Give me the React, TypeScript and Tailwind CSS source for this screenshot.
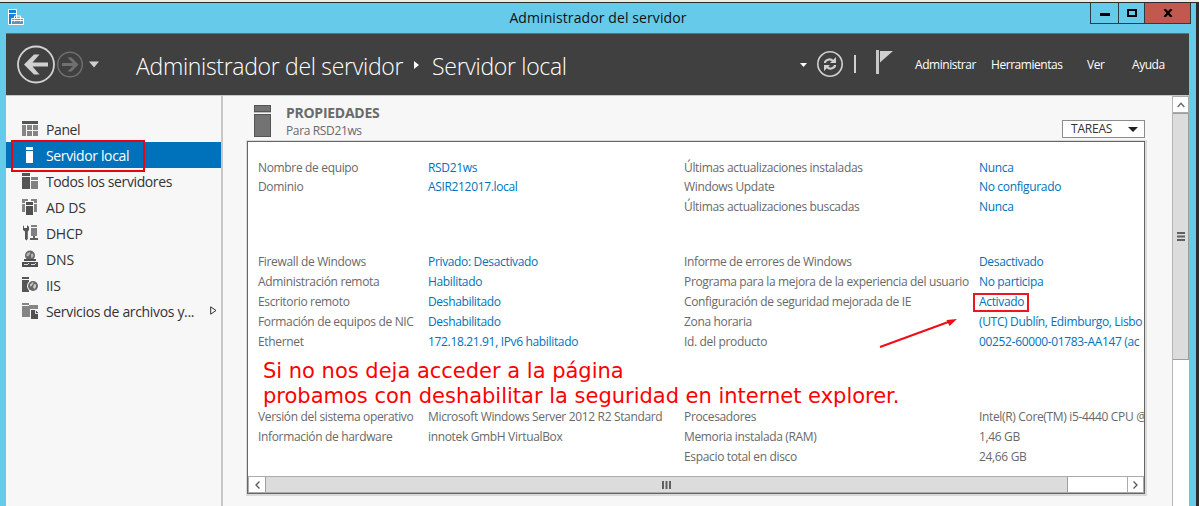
import type { ReactNode } from "react";

type Row = { label: string; value: string; boxed?: boolean };
type Group = { rows: Row[]; plain?: boolean };

const leftGroups: Group[] = [
  { rows: [{ label: "Nombre de equipo", value: "RSD21ws" }, { label: "Dominio", value: "ASIR212017.local" }] },
  {
    rows: [
      { label: "Firewall de Windows", value: "Privado: Desactivado" },
      { label: "Administración remota", value: "Habilitado" },
      { label: "Escritorio remoto", value: "Deshabilitado" },
      { label: "Formación de equipos de NIC", value: "Deshabilitado" },
      { label: "Ethernet", value: "172.18.21.91, IPv6 habilitado" },
    ],
  },
  {
    plain: true,
    rows: [
      { label: "Versión del sistema operativo", value: "Microsoft Windows Server 2012 R2 Standard" },
      { label: "Información de hardware", value: "innotek GmbH VirtualBox" },
    ],
  },
];

const rightGroups: Group[] = [
  {
    rows: [
      { label: "Últimas actualizaciones instaladas", value: "Nunca" },
      { label: "Windows Update", value: "No configurado" },
      { label: "Últimas actualizaciones buscadas", value: "Nunca" },
    ],
  },
  {
    rows: [
      { label: "Informe de errores de Windows", value: "Desactivado" },
      { label: "Programa para la mejora de la experiencia del usuario", value: "No participa" },
      { label: "Configuración de seguridad mejorada de IE", value: "Activado", boxed: true },
      { label: "Zona horaria", value: "(UTC) Dublín, Edimburgo, Lisbo" },
      { label: "Id. del producto", value: "00252-60000-01783-AA147 (ac" },
    ],
  },
  {
    plain: true,
    rows: [
      { label: "Procesadores", value: "Intel(R) Core(TM) i5-4440 CPU @" },
      { label: "Memoria instalada (RAM)", value: "1,46 GB" },
      { label: "Espacio total en disco", value: "24,66 GB" },
    ],
  },
];

function Icon({ children }: { children: ReactNode }) {
  return (
    <svg width="16" height="16" viewBox="0 0 16 16" className="shrink-0 overflow-visible" shapeRendering="crispEdges">
      {children}
    </svg>
  );
}

const PanelIcon = (
  <Icon>
    <path fill="#555" d="M0 0h16v3H0z" />
    <path fill="#858585" d="M0 4h4v11H0zM5 4h5v5H5zM11 4h5v5h-5zM5 10h5v5H5zM11 10h5v5h-5z" />
  </Icon>
);
const LocalIcon = (
  <Icon>
    <path fill="#fff" d="M4 0h7v3H4zM4 4h7v12H4z" />
  </Icon>
);
const AllIcon = (
  <Icon>
    <path fill="#555" d="M0 0h8v3H0zM0 4h8v12H0z" />
    <path fill="#808080" d="M9 4h7v3H9zM9 8h7v8H9z" />
  </Icon>
);
const AdIcon = (
  <Icon>
    <path fill="#858585" d="M0 0h6v2H3v2H0zM9 0h6v4h-3V2H9zM0 5h3v8H0zM12 5h3v8h-3z" />
    <path fill="#505050" d="M4 3h7v3H4zM4 7h7v9H4z" />
  </Icon>
);
const DhcpIcon = (
  <Icon>
    <path fill="#555" shapeRendering="auto" d="M2 0v3h3V0l2 2v3L5.800 6.500V14L4.500 15.500 3 14V6.500L1 5V1.500z" />
    <path fill="#808080" d="M9 0h6v2H9zM9 3h6v8H9z" />
    <path fill="#606060" d="M11 11h2v2h3v2H8v-2h3z" />
  </Icon>
);
const DnsIcon = (
  <Icon>
    <circle cx="8" cy="4.500" r="5" fill="#666" shapeRendering="auto" />
    <path fill="#b7b7b7" shapeRendering="auto" d="M4.500 3l3-2 1 1-2 3-2 .5zM9 3l2-.5.5 2.500-1.500 2-1-.5z" />
    <path fill="#505050" d="M2 8h12v2H2zM0 10h16v6H0z" />
    <path fill="#ddd" d="M2 13h4v1H2zM6 12h1v1H6zM9 13h4v1H9zM13 12h1v1h-1z" />
    <path fill="#f7f7f7" d="M0 10h16v1H0z" />
  </Icon>
);
const IisIcon = (
  <Icon>
    <path fill="#555" d="M0 0h7v2H0zM0 3h7v12H0z" />
    <circle cx="11" cy="9" r="6" fill="#f7f7f7" shapeRendering="auto" />
    <circle cx="11" cy="9" r="5" fill="#686868" shapeRendering="auto" />
    <path fill="#c8c8c8" shapeRendering="auto" d="M8 7.500l3-2.500.5 1L9.500 9 8 9.500zM12 7l2 .5v2.500l-1.500 2-1.500-1.500z" />
  </Icon>
);
const FilesIcon = (
  <Icon>
    <path fill="#858585" d="M0 0h7v2h9v4H8v8H0z" />
    <path fill="#f7f7f7" d="M0 2h7v1H0zM8 6h1v10H8z" />
    <path fill="#505050" d="M9 7h4l3 3v6H9z" />
    <path fill="#ddd" d="M13 7h1v3h2v1h-3z" />
  </Icon>
);

const nav: { label: string; icon: ReactNode; track: string; active?: boolean; more?: boolean }[] = [
  { label: "Panel", icon: PanelIcon, track: "tracking-[-0.4px]" },
  { label: "Servidor local", icon: LocalIcon, track: "tracking-[-0.36px]", active: true },
  { label: "Todos los servidores", icon: AllIcon, track: "tracking-[-0.39px]" },
  { label: "AD DS", icon: AdIcon, track: "tracking-[-0.15px]" },
  { label: "DHCP", icon: DhcpIcon, track: "tracking-[-0.3px]" },
  { label: "DNS", icon: DnsIcon, track: "tracking-[-0.1px]" },
  { label: "IIS", icon: IisIcon, track: "tracking-[-0.3px]" },
  { label: "Servicios de archivos y...", icon: FilesIcon, track: "tracking-[-0.34px]", more: true },
];

function TitleBar() {
  return (
    <div className="relative flex h-[30px] shrink-0 justify-between pl-2">
      <svg width="16" height="17" viewBox="0 0 16 17" className="mt-1.5">
        <path d="M.5.5h8v15h-8z" fill="#1683d8" stroke="#fff" />
        <path d="M0 4.500h8" stroke="#fff" />
        <path d="M3.500 9.500h12v6h-12z" fill="#6e8fae" stroke="#fff" />
        <path d="M6.500 9V7h6v2M4 11.500h11M6.500 10.500v2M12.500 10.500v2" fill="none" stroke="#fff" />
      </svg>
      <div className="absolute inset-x-0 top-[5px] text-center text-[14px] leading-5 tracking-[0.1px] text-[#111]">
        Administrador del servidor
      </div>
      <div className="relative mr-[5px] flex h-[21px] border-x border-b border-[#2d3b43]">
        <div className="flex w-[28px] items-center justify-center border-r border-[#2d3b43]">
          <div className="mt-[3px] h-[3px] w-2.5 bg-black" />
        </div>
        <div className="flex w-[26px] items-center justify-center border-r border-[#2d3b43]">
          <div className="h-2 w-2.5 border-2 border-black" />
        </div>
        <div className="flex w-[45px] items-center justify-center bg-[#c2594f]">
          <svg width="10" height="8" viewBox="0 0 10 8">
            <path d="M1.500 0l7 8M8.500 0l-7 8" stroke="#000" strokeWidth="2.300" />
          </svg>
        </div>
      </div>
    </div>
  );
}

function Header() {
  return (
    <div className="flex h-[62px] shrink-0 items-center border-t border-[#60707a] bg-[#404040] text-white">
      <svg width="86" height="40" viewBox="0 0 86 40" className="ml-2.5 shrink-0">
        <circle cx="20" cy="19.500" r="18" fill="none" stroke="#d2d2d2" strokeWidth="1.800" />
        <path d="M8 19.500L18 9.500h5.500L16.500 17.500h15.500v4H16.500l7 8H18z" fill="#d0d0d0" />
        <circle cx="54" cy="19.500" r="12.300" fill="none" stroke="#6f6f6f" strokeWidth="1.500" />
        <path d="M62.500 19.500l-7-7h-4l5.500 5.500H46v3h11l-5.500 5.500h4z" fill="#707070" />
        <path d="M73 16.500h10l-5 6z" fill="#d0d0d0" />
      </svg>
      <div className="ml-[34px] flex w-[663px] shrink-0 items-center whitespace-nowrap text-[23px] font-light leading-8 tracking-[-0.31px]">
        <span className="mt-[3px]">Administrador del servidor</span>
        <svg width="6" height="8" viewBox="0 0 6 8" className="ml-[11px] mr-3">
          <path d="M0 0l5 4-5 4z" fill="#fff" />
        </svg>
        <span className="mt-[3px]">Servidor local</span>
      </div>
      <svg width="96" height="30" viewBox="0 0 96 30" className="shrink-0">
        <path d="M1 13h7l-3.500 4z" fill="#fff" />
        <circle cx="31" cy="14" r="12.200" fill="none" stroke="#d0d0d0" strokeWidth="1.600" />
        <path d="M26 13c0-3 5-5 8-2M36 15c0 3-5 5-8 2" fill="none" stroke="#d0d0d0" strokeWidth="2.200" />
        <path d="M37 7v6h-6zM25 21v-6h6z" fill="#d0d0d0" />
        <path d="M56 5v18" stroke="#d0d0d0" strokeWidth="2" />
        <path d="M77 0h3v24h-3z" fill="#c8c8c8" />
        <path d="M81 1h13L81 12.500z" fill="#d0d0d0" />
      </svg>
      <nav className="ml-[20px] flex whitespace-nowrap text-[12px] tracking-[-0.45px]">
        <span className="w-[76px]">Administrar</span>
        <span className="w-24">Herramientas</span>
        <span className="w-[45px]">Ver</span>
        <span>Ayuda</span>
      </nav>
    </div>
  );
}

function Sidebar() {
  return (
    <aside className="w-[217px] shrink-0 border-r-2 border-[#c8c8c8] pt-[20px]">
      {nav.map((n) => (
        <div
          key={n.label}
          className={
            n.active
              ? "relative flex h-[26px] items-center bg-[#0072bc] pl-4 text-white"
              : "relative flex h-[26px] items-center pl-4 text-[#333]"
          }
        >
          {n.icon}
          <span className={`ml-2 mt-px whitespace-nowrap text-[14px] leading-5 ${n.track}`}>{n.label}</span>
          {n.more && (
            <svg width="7" height="9" viewBox="0 0 7 9" className="absolute left-[204px] top-2">
              <path d="M.7.800l5.300 3.700-5.300 3.700z" fill="none" stroke="#333" />
            </svg>
          )}
          {n.active && <div className="absolute -top-[2px] left-[5px] h-[32px] w-[134px] border-2 border-[#e30613]" />}
        </div>
      ))}
    </aside>
  );
}

function Column({ groups, cols }: { groups: Group[]; cols: string }) {
  const heights = ["h-[94px]", "h-[155px]", "h-[60px]"];
  return (
    <div className="shrink-0">
      {groups.map((g, i) => (
        <div key={i} className={heights[i]}>
          {g.rows.map((r) => (
            <div key={r.label} className={`grid items-center whitespace-nowrap ${i === 0 ? "h-[19.5px]" : "h-5"} ${cols}`}>
              <span>{r.label}</span>
              <span className={g.plain ? "" : "text-[#0072bc]"}>
                <span className="relative">
                  {r.value}
                  {r.boxed && <span className="absolute -left-[6px] top-0 h-[19px] w-[56px] border-2 border-[#f0141e]" />}
                </span>
              </span>
            </div>
          ))}
        </div>
      ))}
    </div>
  );
}

function Properties() {
  return (
    <section className="relative ml-[23px] w-[901px] shrink-0">
      <div className="flex h-[44px] pl-[8px] pt-[9px]">
        <svg width="17" height="32" viewBox="0 0 17 32">
          <path d="M0 0h17v7H0zM0 9h17v23H0z" fill="#555" />
          <path d="M1 1h15v5H1zM1 10h15v21H1z" fill="#737373" />
          <path d="M0 7.500h17" stroke="#bbb" />
        </svg>
        <div className="-mt-px ml-[15px] text-[#6a6a6a]">
          <div className="text-[14px] font-bold leading-[18px] tracking-[-0.27px]">PROPIEDADES</div>
          <div className="text-[12px] leading-[17px] tracking-[-0.36px]">Para RSD21ws</div>
        </div>
        <div className="ml-auto mr-[2px] mt-[15px] flex h-[18px] w-[83px] items-center justify-between border border-[#8c8c8c] bg-white pl-2 pr-1.5 text-[12px] tracking-[-0.2px] text-[#333]">
          TAREAS
          <svg width="10" height="5" viewBox="0 0 10 5">
            <path d="M0 0h10L5 5z" fill="#222" />
          </svg>
        </div>
      </div>
      <div className="h-[356px] border border-r-2 border-b-2 border-[#dadada]">
        <div className="flex h-[353px] flex-col border border-[#666] bg-white">
          <div className="flex flex-1 overflow-hidden pl-2.5 pt-[16px] text-[12px] leading-4 tracking-[-0.34px] text-[#696969]">
            <div className="w-[426px] shrink-0">
              <Column groups={leftGroups} cols="grid-cols-[170px_256px]" />
            </div>
            <Column groups={rightGroups} cols="grid-cols-[295px_180px]" />
          </div>
          <div className="flex h-[17px] shrink-0 border border-[#ababab]">
            <div className="flex w-4 items-center justify-center">
              <svg width="5" height="8" viewBox="0 0 5 8">
                <path d="M4.500.5L1 4l3.500 3.500" fill="none" stroke="#555" strokeWidth="1.300" />
              </svg>
            </div>
            <div className="flex w-[803px] items-center justify-center border-x border-[#9e9e9e] bg-[#dcdcdc]">
              <svg width="9" height="8" viewBox="0 0 9 8">
                <path d="M1 0v8M4.500 0v8M8 0v8" stroke="#606060" strokeWidth="2" />
              </svg>
            </div>
            <div className="ml-auto flex w-4 items-center justify-center border-l border-[#ababab]">
              <svg width="5" height="8" viewBox="0 0 5 8">
                <path d="M.5.5L4 4 .5 7.500" fill="none" stroke="#555" strokeWidth="1.300" />
              </svg>
            </div>
          </div>
        </div>
      </div>
      <div className="absolute left-[17px] top-[263px] whitespace-nowrap font-['DejaVu_Sans',sans-serif] text-[21px] leading-[25px] tracking-[-0.01px] text-[#f00]">
        Si no nos deja acceder a la página
        <br />
        probamos con deshabilitar la seguridad en internet explorer.
      </div>
      <svg width="82" height="32" viewBox="0 0 82 32" className="absolute left-[632px] top-[221px]">
        <path d="M2 30L73 4" stroke="#f00c14" strokeWidth="2" />
        <path d="M79 2l-7.500 7-3-6z" fill="#f00c14" />
      </svg>
    </section>
  );
}

function VerticalScroll() {
  return (
    <div className="ml-auto w-[17px] shrink-0 border-l border-[#b5b5b5] bg-white">
      <div className="flex h-[17px] items-center justify-center border-y border-r border-[#ababab]">
        <svg width="8" height="6" viewBox="0 0 8 6">
          <path d="M.7 5L4 1.200 7.300 5" fill="none" stroke="#666" strokeWidth="1.300" />
        </svg>
      </div>
      <div className="flex h-[247px] items-center justify-center border border-l-0 border-[#9e9e9e] bg-[#dcdcdc]">
        <svg width="8" height="9" viewBox="0 0 8 9">
          <path d="M0 1h8M0 4.500h8M0 8h8" stroke="#606060" strokeWidth="2" />
        </svg>
      </div>
    </div>
  );
}

export default function App() {
  return (
    <div className="flex h-[506px] w-[1199px] flex-col overflow-hidden bg-[#2c2c2c] font-['Open_Sans','Noto_Sans',sans-serif]">
      <div className="h-[3px] shrink-0 border-b border-[#2c2c2c] bg-[#ecebe7]" />
      <div className="flex w-[1196px] flex-1 flex-col bg-[#66caea]">
        <TitleBar />
        <div className="ml-1.5 mr-[7px] flex flex-1 flex-col">
          <Header />
          <div className="flex flex-1 border-t border-[#c8c8c8] bg-[#f7f7f7]">
            <Sidebar />
            <Properties />
            <VerticalScroll />
          </div>
        </div>
      </div>
    </div>
  );
}
